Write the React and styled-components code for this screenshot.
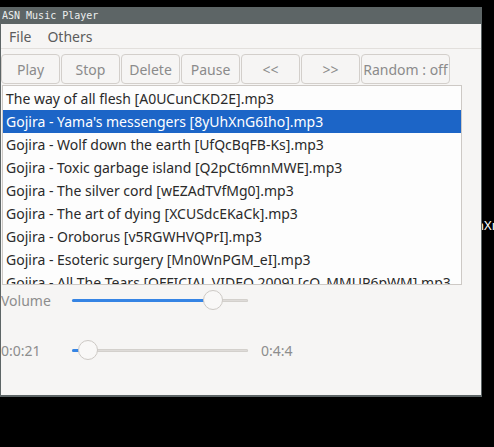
import React from 'react'
import styled, { createGlobalStyle } from 'styled-components'

const GlobalStyle = createGlobalStyle`
html, body {
  margin: 0;
  padding: 0;
  background: #000;
  overflow: hidden;
}
body {
  font-family: "Noto Sans", "DejaVu Sans", sans-serif;
}
`

const songs = [
  'The way of all flesh [A0UCunCKD2E].mp3',
  "Gojira - Yama's messengers [8yUhXnG6Iho].mp3",
  'Gojira - Wolf down the earth [UfQcBqFB-Ks].mp3',
  'Gojira - Toxic garbage island [Q2pCt6mnMWE].mp3',
  'Gojira - The silver cord [wEZAdTVfMg0].mp3',
  'Gojira - The art of dying [XCUSdcEKaCk].mp3',
  'Gojira - Oroborus [v5RGWHVQPrI].mp3',
  'Gojira - Esoteric surgery [Mn0WnPGM_eI].mp3',
  'Gojira - All The Tears [OFFICIAL VIDEO 2009] [cO_MMUP6pWM].mp3',
]

const buttons = [
  { label: 'Play', wide: false },
  { label: 'Stop', wide: false },
  { label: 'Delete', wide: false },
  { label: 'Pause', wide: false },
  { label: '<<', wide: false },
  { label: '>>', wide: false },
  { label: 'Random : off', wide: true },
]

const App = () => {
  return (
    <Desktop>
      <GlobalStyle />
      <Window>
        <TitleBar>ASN Music Player</TitleBar>
        <MenuBar>
          <MenuItem>File</MenuItem>
          <MenuItem>Others</MenuItem>
        </MenuBar>
        <Toolbar>
          {buttons.map((b) => (
            <Button key={b.label} $wide={b.wide}>{b.label}</Button>
          ))}
        </Toolbar>
        <List>
          {songs.map((s, i) => (
            <Row key={s} $selected={i === 1}>{s}</Row>
          ))}
        </List>
        <Controls>
          <Label>Volume</Label>
          <Slider value={0.8} />
          <span />
          <Label>0:0:21</Label>
          <Slider value={0.09} />
          <Label>0:4:4</Label>
        </Controls>
      </Window>
      <Behind>
        <span>nXı</span>
      </Behind>
    </Desktop>
  )
}

const Slider = ({ value }) => (
  <Track>
    <Fill style={{ width: `${value * 100}%` }} />
    <Knob style={{ left: `calc(${value * 100}% - 10px)` }} />
  </Track>
)

const Desktop = styled.div`
display: flex;
align-items: flex-start;
width: 494px;
height: 447px;
padding-top: 7px;
box-sizing: border-box;
background: #000;
`

const Window = styled.div`
width: 482px;
height: 390px;
box-sizing: border-box;
border: 1px solid #5d6566;
border-top: none;
border-bottom-width: 2px;
background: #f6f5f4;
display: flex;
flex-direction: column;
flex-shrink: 0;
`

const TitleBar = styled.div`
height: 17px;
margin: 0 -1px;
padding-left: 2px;
background: #5d6566;
color: #eceeee;
font-family: "DejaVu Sans Mono", monospace;
font-size: 10px;
line-height: 17px;
white-space: nowrap;
`

const MenuBar = styled.div`
display: flex;
gap: 16px;
height: 24px;
padding-left: 8px;
align-items: center;
border-bottom: 1px solid #e2dfdc;
`

const MenuItem = styled.span`
font-size: 14px;
color: #5c5c5c;
`

const Toolbar = styled.div`
display: flex;
gap: 1px;
padding: 5px 0 0 0;
height: 30px;
`

const Button = styled.div`
width: ${(p) => (p.$wide ? '89px' : '59px')};
height: 30px;
box-sizing: border-box;
border: 1px solid #d3cfcb;
border-radius: 4px;
background: #f6f5f4;
color: #8b8b8b;
font-size: 14px;
display: flex;
align-items: center;
justify-content: center;
white-space: nowrap;
overflow: hidden;
`

const List = styled.div`
margin: 1px 0 0 1px;
width: 460px;
height: 200px;
box-sizing: border-box;
border: 1px solid #cdc9c5;
background: #fdfdfd;
padding-top: 1px;
overflow: hidden;
`

const Row = styled.div`
height: 23px;
line-height: 23px;
padding-left: 3px;
font-size: 14px;
white-space: nowrap;
color: ${(p) => (p.$selected ? '#ffffff' : '#2a2a2a')};
background: ${(p) => (p.$selected ? '#1c65c7' : 'transparent')};
`

const Controls = styled.div`
display: grid;
grid-template-columns: 71px 176px 1fr;
grid-auto-rows: 20px;
row-gap: 30px;
align-items: center;
padding-top: 5px;
`

const Label = styled.span`
font-size: 14px;
color: #8d8d8d;
white-space: nowrap;
&:nth-child(6) {
  padding-left: 13px;
}
`

const Track = styled.div`
position: relative;
height: 3px;
background: #dedbd8;
border-radius: 2px;
box-shadow: inset 0 0 0 1px #d3d0cc;
`

const Fill = styled.div`
height: 100%;
background: #3584e4;
border-radius: 2px;
`

const Knob = styled.div`
position: absolute;
top: -9px;
width: 20px;
height: 20px;
box-sizing: border-box;
border-radius: 50%;
border: 1px solid #cdc9c5;
background: #f9f8f7;
`

const Behind = styled.div`
width: 12px;
height: 447px;
overflow: hidden;
display: flex;
align-items: flex-start;
color: #fff;
font-size: 13px;
span {
  margin: 209px 0 0 -6px;
  white-space: nowrap;
}
`

export default App
